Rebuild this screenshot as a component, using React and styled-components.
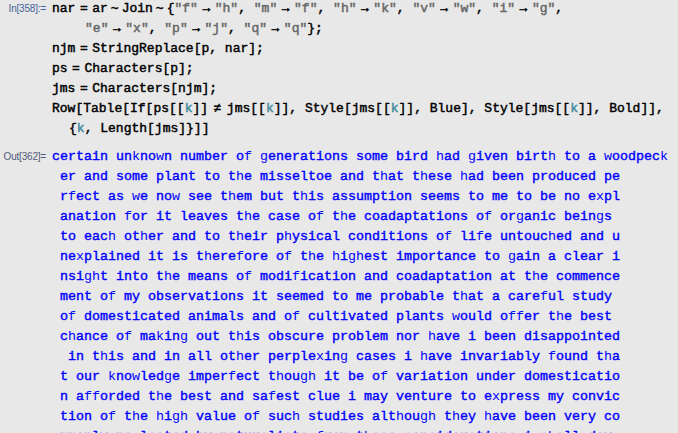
import styled, { createGlobalStyle } from "styled-components";

const GlobalStyle = createGlobalStyle`
  html, body {
    margin: 0;
    padding: 0;
    background: #e8e8e8;
  }
  body {
    overflow: hidden;
  }
`;

const Notebook = styled.div`
  width: 678px;
  height: 433px;
  overflow: hidden;
  background: #e8e8e8;
  display: flex;
  flex-direction: column;
  gap: 8px;
`;

const Cell = styled.div`
  display: grid;
  grid-template-columns: 52px 1fr;
  align-items: baseline;
  margin-top: ${(p) => p.$top || 0}px;
`;

const Label = styled.div`
  font-family: "Liberation Sans", Arial, sans-serif;
  font-size: 10px;
  letter-spacing: -0.2px;
  line-height: 20px;
  text-align: right;
  padding-right: 6px;
  white-space: nowrap;
  color: ${(p) => p.$color};
`;

/* Courier-like bold: regular face thickened a little, Liberation bold is too heavy */
const Code = styled.div`
  font-family: "Liberation Mono", "Courier New", monospace;
  font-size: 13px;
  font-weight: normal;
  -webkit-text-stroke: 0.45px currentColor;
  color: #000;
`;

const CodeLine = styled.div`
  height: 20px;
  line-height: 20px;
  white-space: pre;
  padding-left: ${(p) => p.$indent || 0}px;
`;

const Str = styled.span`
  color: #666666;
`;

const Loc = styled.span`
  color: #438a9e;
`;

const Op = styled.span`
  display: inline-block;
  padding: 0 ${(p) => (p.$pad == null ? 4.5 : p.$pad)}px;
`;

const Output = styled.div`
  font-family: "Liberation Mono", "Courier New", monospace;
  font-size: 13.33px;
  color: #0000ff;
`;

const OutLine = styled.div`
  height: 20px;
  line-height: 20px;
  white-space: pre;
  padding-left: ${(p) => p.$indent || 0}px;
`;

const Run = styled.span`
  font-weight: normal;
  -webkit-text-stroke: ${(p) => (p.$bold ? "0.4px" : "0")} currentColor;
`;

const outLines = [
  "certain unknown number of generations some bird had given birth to a woodpeck",
  "er and some plant to the misseltoe and that these had been produced pe",
  "rfect as we now see them but this assumption seems to me to be no expl",
  "anation for it leaves the case of the coadaptations of organic beings",
  "to each other and to their physical conditions of life untouched and u",
  "nexplained it is therefore of the highest importance to gain a clear i",
  "nsight into the means of modification and coadaptation at the commence",
  "ment of my observations it seemed to me probable that a careful study",
  "of domesticated animals and of cultivated plants would offer the best",
  "chance of making out this obscure problem nor have i been disappointed",
  " in this and in all other perplexing cases i have invariably found tha",
  "t our knowledge imperfect though it be of variation under domesticatio",
  "n afforded the best and safest clue i may venture to express my convic",
  "tion of the high value of such studies although they have been very co",
  "mmonly neglected by naturalists from these considerations i shall dev",
];

// letters that came out of the replacement rules are plain, the rest bold
const plain = new Set("hfkwgxj".split(""));

function toRuns(line) {
  const runs = [];
  for (const ch of line) {
    const bold = !plain.has(ch);
    const last = runs[runs.length - 1];
    if (last && last.bold === bold) last.text += ch;
    else runs.push({ bold, text: ch });
  }
  return runs;
}

const Rule = ({ from, to, last }) => (
  <>
    <Str>"{from}"</Str>
    <Op>→</Op>
    <Str>"{to}"</Str>
    {last ? "" : ", "}
  </>
);

export default function App() {
  return (
    <>
      <GlobalStyle />
      <Notebook>
        <Cell $top={-1}>
          <Label $color="#44639a">In[358]:=</Label>
          <Code>
            <CodeLine>
              nar<Op>=</Op>ar<Op $pad={3}>~</Op>Join<Op $pad={3}>~</Op>
              {"{"}
              <Rule from="f" to="h" />
              <Rule from="m" to="f" />
              <Rule from="h" to="k" />
              <Rule from="v" to="w" />
              <Rule from="i" to="g" last />,
            </CodeLine>
            <CodeLine $indent={33}>
              <Rule from="e" to="x" />
              <Rule from="p" to="j" />
              <Rule from="q" to="q" last />
              {"};"}
            </CodeLine>
            <CodeLine>
              njm<Op>=</Op>StringReplace[p, nar];
            </CodeLine>
            <CodeLine>
              ps<Op>=</Op>Characters[p];
            </CodeLine>
            <CodeLine>
              jms<Op>=</Op>Characters[njm];
            </CodeLine>
            <CodeLine>
              Row[Table[If[ps[[<Loc>k</Loc>]]<Op $pad={5.5}>≠</Op>jms[[<Loc>k</Loc>]], Style[jms[[<Loc>k</Loc>]], Blue], Style[jms[[<Loc>k</Loc>]], Bold]],
            </CodeLine>
            <CodeLine $indent={17}>
              {"{"}
              <Loc>k</Loc>, Length[jms]{"}]]"}
            </CodeLine>
          </Code>
        </Cell>
        <Cell>
          <Label $color="#4f5b78">Out[362]=</Label>
          <Output>
            {outLines.map((line, i) => (
              <OutLine key={i} $indent={i === 0 ? 0 : 8}>
                {toRuns(line).map((r, j) => (
                  <Run key={j} $bold={r.bold}>
                    {r.text}
                  </Run>
                ))}
              </OutLine>
            ))}
          </Output>
        </Cell>
      </Notebook>
    </>
  );
}
